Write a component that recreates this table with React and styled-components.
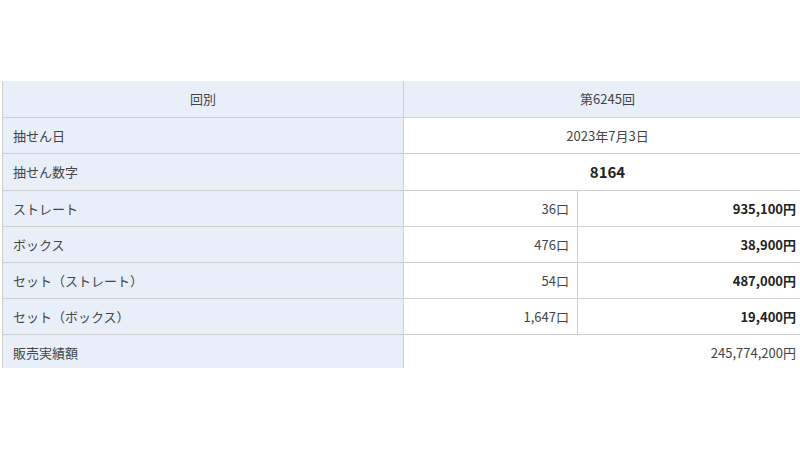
import styled, { createGlobalStyle } from "styled-components";

const GlobalStyle = createGlobalStyle`
  body {
    margin: 0;
    background: #fff;
    overflow: hidden;
    font-family: "Noto Sans CJK JP", "Noto Sans", sans-serif;
  }
`;

const Page = styled.div`
  width: 800px;
  height: 450px;
  padding: 81px 0 0 2px;
  box-sizing: border-box;
`;

const Clip = styled.div`
  height: 287px;
  overflow: hidden;
`;

const Table = styled.table`
  width: 810px;
  border-collapse: collapse;
  table-layout: fixed;
  font-size: 13px;
  color: #444;
`;

const Row = styled.tr`
  height: ${(p) => (p.$tall ? 37 : 36)}px;
`;

const Label = styled.th`
  padding: 0 10px;
  box-sizing: border-box;
  background: #e8eff9;
  border: 1px solid #cfcfcf;
  border-top: none;
  font-weight: normal;
  text-align: ${(p) => (p.$center ? "center" : "left")};
`;

const Cell = styled.td`
  padding: 0 ${(p) => (p.$pad ? p.$pad : 8)}px 0 8px;
  box-sizing: border-box;
  border: 1px solid #cfcfcf;
  border-top: ${(p) => (p.$first ? "none" : "1px solid #cfcfcf")};
  background: ${(p) => (p.$head ? "#e8eff9" : "#fff")};
  text-align: ${(p) => p.$align || "center"};
  font-weight: ${(p) => (p.$bold ? "bold" : "normal")};
  font-size: ${(p) => (p.$big ? "15px" : "13px")};
  color: ${(p) => (p.$bold ? "#222" : "#444")};
`;

const prizes = [
  ["ストレート", "36口", "935,100円"],
  ["ボックス", "476口", "38,900円"],
  ["セット（ストレート）", "54口", "487,000円"],
  ["セット（ボックス）", "1,647口", "19,400円"],
];

export default function App() {
  return (
    <Page>
      <GlobalStyle />
      <Clip>
        <Table>
          <colgroup>
            <col style={{ width: 401 }} />
            <col style={{ width: 174 }} />
            <col />
          </colgroup>
          <tbody>
            <Row>
              <Label $center>回別</Label>
              <Cell $head $first colSpan={2}>第6245回</Cell>
            </Row>
            <Row>
              <Label>抽せん日</Label>
              <Cell colSpan={2}>2023年7月3日</Cell>
            </Row>
            <Row $tall>
              <Label>抽せん数字</Label>
              <Cell colSpan={2} $bold $big>8164</Cell>
            </Row>
            {prizes.map(([name, count, amount]) => (
              <Row key={name}>
                <Label>{name}</Label>
                <Cell $align="right">{count}</Cell>
                <Cell $align="right" $bold $pad={15}>{amount}</Cell>
              </Row>
            ))}
            <Row>
              <Label>販売実績額</Label>
              <Cell colSpan={2} $align="right" $pad={15}>245,774,200円</Cell>
            </Row>
          </tbody>
        </Table>
      </Clip>
    </Page>
  );
}
